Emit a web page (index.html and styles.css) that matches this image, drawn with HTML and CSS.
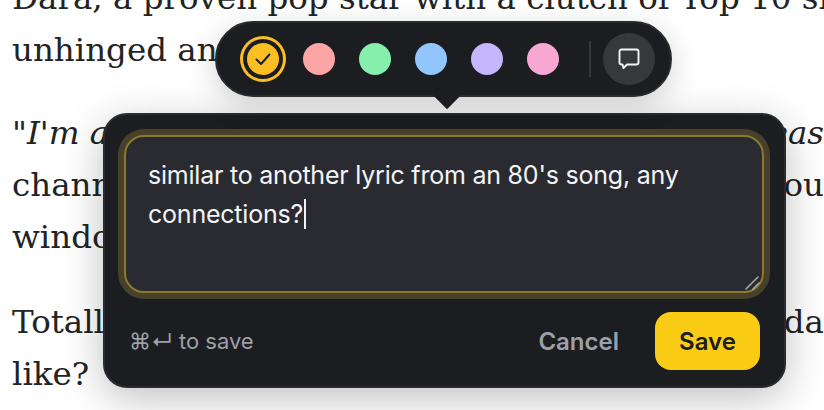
FILE: index.html
```html
<!DOCTYPE html>
<html lang="en">
<head>
<meta charset="utf-8">
<title>Annotation</title>
<link rel="stylesheet" href="styles.css">
</head>
<body>
<article class="article">
  <p class="para">
    <span class="line">Dara, a proven pop star with a clutch of Top 10 si</span>
    <span class="line">unhinged and</span>
  </p>
  <p class="para">
    <span class="line split"><em>"I'm a</em><em>eas</em></span>
    <span class="line split"><span>chann</span><span>ou</span></span>
    <span class="line">windows</span>
  </p>
  <p class="para">
    <span class="line split"><span>Totally</span><span>da</span></span>
    <span class="line">like?</span>
  </p>
</article>

<div class="toolbar">
  <button class="swatch swatch-yellow is-selected" aria-label="Yellow">
    <svg class="check" viewBox="0 0 20 20" width="20" height="20"><path d="M3.5 10.5 8 15 16.5 5.5" fill="none" stroke="#1c1d21" stroke-width="2" stroke-linecap="round" stroke-linejoin="round"/></svg>
  </button>
  <button class="swatch swatch-red" aria-label="Red"></button>
  <button class="swatch swatch-green" aria-label="Green"></button>
  <button class="swatch swatch-blue" aria-label="Blue"></button>
  <button class="swatch swatch-purple" aria-label="Purple"></button>
  <button class="swatch swatch-pink" aria-label="Pink"></button>
  <span class="divider"></span>
  <button class="note-btn" aria-label="Add note">
    <svg viewBox="0 0 22 22" width="22" height="22"><path d="M3.5 1.5h15a2 2 0 0 1 2 2v11a2 2 0 0 1-2 2h-9.5l-3.5 3.5-1-3.5h-1a2 2 0 0 1-2-2v-11a2 2 0 0 1 2-2z" fill="none" stroke="#f3f4f6" stroke-width="1.9" stroke-linejoin="round"/></svg>
  </button>
</div>
<div class="arrow"></div>

<section class="card">
  <div class="input">similar to another lyric from an 80's song, any connections?<span class="caret"></span>
    <svg class="grip" viewBox="0 0 16 14" width="16" height="14"><path d="M1 13 13 1M8 13l6-6" fill="none" stroke="#a4a5a8" stroke-width="1.6" stroke-linecap="round"/></svg>
  </div>
  <footer class="footer">
    <span class="hint">⌘↵ to save</span>
    <div class="actions">
      <button class="cancel">Cancel</button>
      <button class="save">Save</button>
    </div>
  </footer>
</section>
</body>
</html>
```
FILE: styles.css
```css
* { box-sizing: border-box; }
html, body { margin: 0; height: 100%; overflow: hidden; background: #fff; }
body { position: relative; width: 824px; height: 410px; }

.article {
  margin-top: -28px;
  padding-left: 12px;
  font-family: "DejaVu Serif", serif;
  font-size: 32.5px;
  line-height: 52px;
  color: #222323;
}
.para { margin: 0 0 33px; }
.para:first-child { margin-bottom: 31px; }
.line { display: block; white-space: nowrap; }
.split { display: flex; justify-content: space-between; width: 812px; }

.toolbar {
  position: absolute;
  left: 215px;
  top: 21px;
  width: 457px;
  height: 76px;
  display: flex;
  align-items: center;
  padding: 0 15px 0 30px;
  background: #1c1d21;
  border: 2px solid #2a2b2f;
  border-radius: 38px;
  box-shadow: 0 8px 30px rgba(0, 0, 0, .18);
  z-index: 3;
}
.swatch {
  width: 32px;
  height: 32px;
  margin-right: 24px;
  padding: 0;
  border: 0;
  border-radius: 50%;
  display: flex;
  align-items: center;
  justify-content: center;
}
.swatch-yellow { background: #fbbf24; }
.swatch-red { background: #fca5a5; }
.swatch-green { background: #86efac; }
.swatch-blue { background: #93c5fd; }
.swatch-purple { background: #c4b5fd; }
.swatch-pink { background: #f9a8d4; margin-right: 30px; }
.is-selected { box-shadow: 0 0 0 4px #1c1d21, 0 0 0 7px #fbbf24; }
.divider { width: 2px; height: 36px; background: #36373b; margin-right: 12px; }
.note-btn {
  width: 52px;
  height: 52px;
  padding: 0;
  border: 0;
  border-radius: 50%;
  background: #37383c;
  display: flex;
  align-items: center;
  justify-content: center;
}
.arrow {
  position: absolute;
  left: 437px;
  top: 85px;
  width: 20px;
  height: 20px;
  background: #1c1d21;
  transform: rotate(45deg);
  z-index: 3;
}

.card {
  position: absolute;
  left: 103px;
  top: 113px;
  width: 683px;
  height: 275px;
  padding: 20px 20px 20px 19px;
  background: #1c1d21;
  border: 2px solid #2a2b2f;
  border-radius: 24px;
  box-shadow: 0 10px 40px rgba(0, 0, 0, .25);
  font-family: Inter, "Liberation Sans", sans-serif;
  z-index: 2;
}
.input {
  position: relative;
  height: 158px;
  padding: 19px 21px 18px 22px;
  background: #2a2b30;
  border: 2px solid #8c7a2c;
  border-radius: 20px;
  box-shadow: 0 0 0 6px #47402a;
  color: #f3f4f6;
  font-size: 25px;
  letter-spacing: -.22px;
  line-height: 39px;
}
.caret {
  display: inline-block;
  width: 1.5px;
  height: 30px;
  margin-left: 1px;
  vertical-align: -6px;
  background: #f3f4f6;
}
.grip {
  position: absolute;
  right: 1px;
  bottom: 1px;
}
.footer {
  display: flex;
  align-items: center;
  justify-content: space-between;
  margin-top: 19px;
  padding: 0 4px 0 5px;
}
.hint { color: #9ca0a9; font-size: 22px; }
.actions { display: flex; align-items: center; gap: 36px; }
.cancel, .save {
  font-family: inherit;
  font-size: 24px;
  font-weight: 600;
  border: 0;
  padding: 0;
}
.cancel { background: transparent; color: #9ca0a9; }
.save {
  width: 105px;
  height: 58px;
  background: #facc15;
  color: #1c1d21;
  border-radius: 16px;
}
```
